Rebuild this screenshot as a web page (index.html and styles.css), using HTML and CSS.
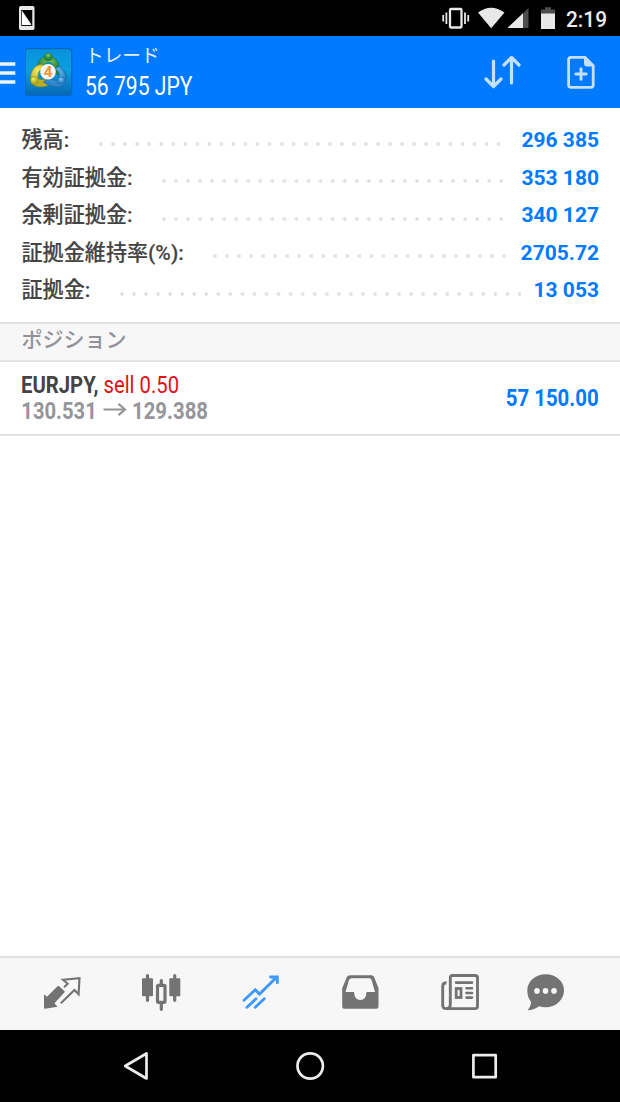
FILE: index.html
```html
<!DOCTYPE html>
<html lang="ja">
<head>
<meta charset="utf-8">
<title>トレード</title>
<link rel="stylesheet" href="styles.css">
</head>
<body>
<div class="screen">
  <div class="status">
    <svg class="notice" width="16" height="24" viewBox="0 0 16 24"><rect width="15.5" height="24" rx="1.8" fill="#e8e8e8"/><rect x="2.8" y="4.5" width="10" height="15" fill="#aaa" stroke="#111" stroke-width="1"/><path d="M3 4.5H13V19Z" fill="#000"/><path d="M3 5L12 19H3Z" fill="#fff"/></svg>
    <svg width="190" height="36" viewBox="430 0 190 36">
      <rect x="450" y="9" width="11.5" height="18.5" rx="1" fill="none" stroke="#e8e8e8" stroke-width="2.3"/>
      <path d="M446.4 12.5V24M443.2 15V21.5M465 12.5V24M468.2 15V21.5" stroke="#e8e8e8" stroke-width="1.8"/>
      <path d="M478 12.5Q491 3 504.5 12.5L491.2 28.3Z" fill="#e8e8e8"/>
      <path d="M528.5 8V28H507.5Z" fill="#4d4d4d"/><path d="M523 13.2V28H507.5Z" fill="#e8e8e8"/>
      <path d="M541 9.5H545V7.3H551V9.5H555V14H541Z" fill="#4d4d4d"/><path d="M541 13.5H555V29H541Z" fill="#e8e8e8"/>
      <text class="clock" x="566" y="26.5" textLength="41" lengthAdjust="spacingAndGlyphs">2:19</text>
    </svg>
  </div>
  <header class="header">
    <svg class="menu" width="16" height="24" viewBox="0 0 16 24"><path d="M0 3H15.3M0 12H15.3M0 21H15.3" stroke="#eef5ff" stroke-width="3.6"/></svg>
    <svg class="logo" width="48" height="48" viewBox="0 0 48 48">
      <defs>
        <linearGradient id="tile" x2="0" y2="1"><stop stop-color="#0991df"/><stop offset=".45" stop-color="#0aa0de"/><stop offset="1" stop-color="#0669b5"/></linearGradient>
        <radialGradient id="g" cx=".5" cy=".25"><stop stop-color="#7cc768"/><stop offset="1" stop-color="#278538"/></radialGradient>
        <radialGradient id="y" cx=".35" cy=".3"><stop stop-color="#f6ed67"/><stop offset="1" stop-color="#b7ae25"/></radialGradient>
        <radialGradient id="b" cx=".5" cy=".3"><stop stop-color="#79c9f1"/><stop offset="1" stop-color="#2b86cc"/></radialGradient>
      </defs>
      <rect x=".1" y=".6" width="46.6" height="46.6" rx="2.4" fill="url(#tile)" stroke="#0868b9" stroke-width="1.2"/>
      <path d="M12.5 23C11.5 13 16 8.5 23 8.5S36 14 35 27L28 25C30 19 28 14.5 23.5 14.5S17 18 19 24Z" fill="url(#g)" stroke="#23713c" stroke-width=".7"/>
      <path d="M17 16C8 17 5 25 5.5 33C8 40 17 40.5 27 36L22 30C16 33 13 32 13 28C13 24 15 21 20 20Z" fill="url(#y)" stroke="#6f832c" stroke-width=".7"/>
      <path d="M34 18C40 22 41.5 27 41 33C39 41 28 41 18.5 34L24 29C29 34 33 33 34 29C35 26 34 23 30 21Z" fill="url(#b)" stroke="#175f9c" stroke-width=".7"/>
      <circle cx="23.2" cy="9" r="4" fill="url(#g)" stroke="#23713c" stroke-width=".5"/>
      <circle cx="9.5" cy="32.5" r="4" fill="url(#y)" stroke="#6f832c" stroke-width=".5"/>
      <circle cx="36" cy="32.5" r="3.6" fill="url(#b)" stroke="#175f9c" stroke-width=".5"/>
      <circle cx="23" cy="23.8" r="7.8" fill="#f5f5f3"/>
      <text class="four" x="23" y="29.2" text-anchor="middle">4</text>
    </svg>
    <div class="heading">
      <div class="title">トレード</div>
      <svg width="130" height="28"><text class="total" x="0" y="22" textLength="107.5" lengthAdjust="spacingAndGlyphs">56 795 JPY</text></svg>
    </div>
    <svg class="sort" width="40" height="36" viewBox="482 54 40 36" fill="none" stroke="#c5dfff" stroke-width="3.2" stroke-linecap="round" stroke-linejoin="round"><path d="M493.5 61V86M486 79L493.5 86.5L501 79M511.5 83V58M504 65L511.5 57.5L519 65"/></svg>
    <svg width="30" height="36" viewBox="566 54 30 36"><path d="M571 57.3H585L593.2 65.5V85Q593.2 87.4 590.8 87.4H571Q568.6 87.4 568.6 85V59.7Q568.6 57.3 571 57.3Z" fill="none" stroke="#c5dfff" stroke-width="2.8"/><path d="M584 56.5L594 66.5H587Q584 66.5 584 63Z" fill="#c5dfff"/><path d="M581 68.8V79.2M575.8 74H586.2" stroke="#c5dfff" stroke-width="3" stroke-linecap="round"/></svg>
  </header>
  <section class="summary">
    <div class="row"><span class="label">残高:</span><i class="dots"></i><b class="value">296 385</b></div>
    <div class="row"><span class="label">有効証拠金:</span><i class="dots"></i><b class="value">353 180</b></div>
    <div class="row"><span class="label">余剰証拠金:</span><i class="dots"></i><b class="value">340 127</b></div>
    <div class="row"><span class="label">証拠金維持率(%):</span><i class="dots"></i><b class="value">2705.72</b></div>
    <div class="row"><span class="label">証拠金:</span><i class="dots"></i><b class="value">13 053</b></div>
  </section>
  <h2 class="section">ポジション</h2>
  <div class="position">
    <svg width="200" height="60" viewBox="20 368 200 60">
      <text class="symbol" x="21" y="393.4" textLength="77.5" lengthAdjust="spacingAndGlyphs">EURJPY,</text>
      <text class="side" x="103.5" y="393.4" textLength="75.5" lengthAdjust="spacingAndGlyphs">sell 0.50</text>
      <text class="price" x="21.3" y="419" textLength="75.5" lengthAdjust="spacingAndGlyphs">130.531</text>
      <path d="M103.5 409.5H125M118.5 403.8L125 409.5L118.5 415.2" fill="none" stroke="#95959a" stroke-width="2.2"/>
      <text class="price" x="132" y="419" textLength="76" lengthAdjust="spacingAndGlyphs">129.388</text>
    </svg>
    <svg width="120" height="60" viewBox="480 368 120 60"><text class="profit" x="505.7" y="406" textLength="93" lengthAdjust="spacingAndGlyphs">57 150.00</text></svg>
  </div>
  <main class="blank"></main>
  <nav class="tabs">
    <svg width="620" height="72" viewBox="0 957.7 620 72" fill="#737373">
      <path d="M44 994L47 996.5L57.5 986Q58.5 985.3 59.5 986.2L65 991.5L54.5 1003L57.5 1006.5L45 1008.5Q44 1008.5 44 1007.5Z"/>
      <path d="M64 987L67.7 983.5L63 979.5L79.5 977.8L78.6 994L74.5 989.8L60.8 1003" fill="none" stroke="#737373" stroke-width="2.1"/>
      <path d="M147.5 975.3V1000M161.3 980.3V984M161.3 1003V1009M174.7 975.3V1000" stroke="#737373" stroke-width="3.2" stroke-linecap="round"/>
      <rect x="142" y="978" width="11" height="18" rx="1"/><rect x="169.3" y="978" width="11" height="18" rx="1"/><rect x="157.5" y="985" width="7.5" height="17" rx="1" fill="none" stroke="#737373" stroke-width="3.2"/>
      <path d="M244 1000L255.2 989.5L259.5 993.8L276.5 977M270.5 976.7H277.3V982.5M247 1007L256 998.5M255.3 1007L264.3 998.5" fill="none" stroke="#3d99ff" stroke-width="2.9" stroke-linecap="round"/>
      <path fill-rule="evenodd" d="M350 975H371.5Q373 975 374 976.5L378.5 988V1006.5Q378.5 1008.5 376.5 1008.5H344.2Q342.2 1008.5 342.2 1006.5V988L347 976.5Q348 975 350 975ZM351 978L349 979.5L345.5 991.8H354Q354.5 999.8 360.3 999.8T366.5 991.8H375L371.5 979.5L370 978Z"/>
      <path d="M446.5 982.5Q442.7 982.5 442.7 986V1005Q442.7 1008.3 446 1008.3H475Q477.5 1008.3 477.5 1006V977.5Q477.5 975.2 475 975.2H452.7Q450.3 975.2 450.3 977.5V1004Q450.3 1008.3 446 1008.3" fill="none" stroke="#737373" stroke-width="2.9"/>
      <path d="M456 982.3H472M466.5 988H472M466.5 992.7H472M466.5 997.3H472" stroke="#737373" stroke-width="2.6" stroke-linecap="round"/><rect x="456.2" y="988.2" width="4.8" height="9" fill="none" stroke="#737373" stroke-width="2.8"/>
      <path d="M545.7 974C556 974 564 981 564 990.2S556 1007 545.7 1007Q542 1007 539 1006Q533.5 1010 527.5 1010Q531 1006.5 531 1001.5Q527.3 996.5 527.3 990.5C527.3 981 535.5 974 545.7 974Z"/>
      <g fill="#f7f7f7"><circle cx="537" cy="990.6" r="2.8"/><circle cx="545.5" cy="990.6" r="2.8"/><circle cx="554" cy="990.6" r="2.8"/></g>
    </svg>
  </nav>
  <div class="system">
    <svg width="620" height="72" viewBox="0 1030 620 72" fill="none" stroke="#ececec" stroke-width="2.7" stroke-linejoin="round"><path d="M146.5 1053.5V1078.5L125.2 1066Z"/><circle cx="310.2" cy="1066" r="12.7"/><rect x="473.4" y="1055.2" width="22.3" height="22"/></svg>
  </div>
</div>
</body>
</html>
```
FILE: styles.css
```css
* { box-sizing: border-box; }
body { margin: 0; background: #fff; font-family: Roboto, "Noto Sans CJK JP", sans-serif; }
svg { display: block; flex: none; }
.screen { width: 620px; height: 1102px; display: flex; flex-direction: column; overflow: hidden; }
.status { height: 36px; flex: none; background: #000; display: flex; align-items: center; justify-content: space-between; padding-left: 19px; }
.clock { font-size: 22px; fill: #ececec; font-weight: 500; }
.header { height: 72px; flex: none; background: #007aff; display: flex; align-items: center; padding-right: 24px; }
.menu { margin-right: 9px; margin-top: 2px; }
.logo { margin-right: 12px; }
.four { font: bold 15px Roboto, sans-serif; fill: #f39336; }
.heading { flex: 1; height: 68px; padding-top: 2px; }
.title { font-size: 18.7px; line-height: 28px; height: 33px; color: #e3f0ff; font-family: "Noto Sans CJK JP", sans-serif; font-weight: 400; }
.total { font-size: 25px; fill: #fff; }
.sort { margin-right: 44px; }
.summary { height: 214px; flex: none; padding: 13.5px 21px 0 21.5px; }
.row { height: 37.5px; display: flex; align-items: center; }
.label { font-size: 21.1px; line-height: 30px; font-weight: 500; color: #444; white-space: nowrap; -webkit-text-stroke: 0.15px #444; }
.dots { flex: 1; height: 4px; margin: 7px 13px 0 29.5px; background: radial-gradient(circle at 2px 2px, #e2e2e2 1.5px, transparent 2.2px) 0 0 / 12.05px 4px repeat-x; }
.value { font-size: 21px; font-weight: 700; color: #007aff; }
.section { margin: 0; height: 40px; flex: none; border-top: 2px solid #e2e2e2; border-bottom: 2px solid #e2e2e2; background: #f7f7f7; padding-left: 21.5px; font-size: 21px; line-height: 33px; font-weight: 500; color: #929297; }
.position { height: 74px; flex: none; display: flex; justify-content: space-between; padding: 6px 20px 0; border-bottom: 2px solid #e2e2e2; }
.symbol { font-size: 24px; font-weight: 700; fill: #444; }
.side { font-size: 24px; fill: #e40f13; }
.price { font-size: 23.5px; font-weight: 700; fill: #95959a; }
.profit { font-size: 24px; font-weight: 700; fill: #007aff; }
.blank { flex: 1; }
.tabs { height: 74px; flex: none; border-top: 2px solid #e2e2e2; background: #f7f7f7; }
.system { height: 72px; flex: none; background: #000; }
```
